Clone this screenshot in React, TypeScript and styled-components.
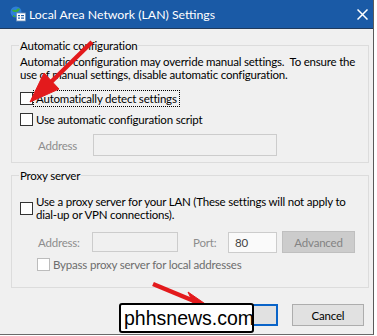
import styled, { createGlobalStyle } from 'styled-components';

const GlobalStyle = createGlobalStyle`
  html, body {
    margin: 0;
    padding: 0;
    background: #ffffff;
  }
  body {
    font-family: Lato, 'Noto Sans', sans-serif;
    font-size: 11.5px;
    letter-spacing: -0.2px;
    line-height: 15px;
    color: #000;
  }
`;

const Window = styled.div`
  position: relative;
  width: 373px;
  height: 334px;
  background: #f0f0f0;
  border-right: 1px solid #5a5a5a;
  border-bottom: 1px solid #6a6a6a;
  overflow: hidden;
  white-space: nowrap;
`;

const TitleBar = styled.div`
  display: flex;
  align-items: center;
  height: 29px;
  width: 377px;
  padding-left: 10px;
  box-sizing: border-box;
  background: #1a5aa6;
  border-bottom: 1px solid #203a5c;
  color: #fff;
`;

const Title = styled.span`
  flex: 1;
  margin-left: 3px;
  font-size: 12.3px;
  letter-spacing: 0;
`;

const CloseBtn = styled.span`
  display: flex;
  width: 20px;
`;

const Body = styled.div`
  padding: 9px 4px 0 11px;
`;

const Group = styled.fieldset<{ gap?: number }>`
  margin: ${p => p.gap ?? 0}px 0 0 0;
  padding: 1px 8px 6px 8px;
  border: 1px solid #dcdcdc;
  min-width: 0;
`;

const Legend = styled.legend`
  padding: 0 1px;
  line-height: 15px;
  margin-left: -1px;
`;

const Desc = styled.div`
  line-height: 13px;
  padding-top: 1px;
`;

const CheckRow = styled.label<{ top: number; disabled?: boolean }>`
  display: flex;
  align-items: center;
  margin-top: ${p => p.top}px;
  min-height: 16px;
  color: ${p => (p.disabled ? '#6d6d6d' : '#000')};
`;

const Box = styled.span<{ disabled?: boolean }>`
  flex: none;
  width: 11px;
  height: 11px;
  background: #fff;
  border: 1px solid ${p => (p.disabled ? '#bcbcbc' : '#333')};
`;

const CheckText = styled.span<{ focused?: boolean }>`
  margin-left: 2px;
  padding: 0 1px;
  line-height: 13px;
  outline: ${p => (p.focused ? '1px dotted #000' : 'none')};
  outline-offset: 1px;
`;

const FieldRow = styled.div<{ top: number }>`
  display: flex;
  align-items: center;
  margin-top: ${p => p.top}px;
  padding-left: 18px;
`;

const Label = styled.span<{ width: number }>`
  width: ${p => p.width}px;
  color: #8d8d8d;
  flex: none;
`;

const Input = styled.div<{ width: number; height: number; white?: boolean }>`
  box-sizing: border-box;
  width: ${p => p.width}px;
  height: ${p => p.height}px;
  border: 1px solid #cccccc;
  background: ${p => (p.white ? '#fafafa' : '#f0f0f0')};
  padding: 2px 0 0 6px;
  color: #444;
  flex: none;
`;

const Button = styled.div<{ width: number; primary?: boolean; disabled?: boolean }>`
  box-sizing: border-box;
  display: flex;
  align-items: center;
  justify-content: center;
  width: ${p => p.width}px;
  height: 22px;
  flex: none;
  background: ${p => (p.disabled ? '#cccccc' : '#e1e1e1')};
  border: ${p => (p.primary ? '2px solid #0a64c8' : `1px solid ${p.disabled ? '#bfbfbf' : '#adadad'}`)};
  color: ${p => (p.disabled ? '#838383' : '#000')};
`;

const Buttons = styled.div`
  display: flex;
  justify-content: flex-end;
  gap: 14px;
  margin-top: 16px;
  padding-right: 5px;
`;

const Overlay = styled.svg`
  position: absolute;
  left: 0;
  top: 0;
  pointer-events: none;
`;

const Watermark = styled.div`
  position: absolute;
  left: 119px;
  top: 303px;
  width: 135px;
  height: 30px;
  box-sizing: border-box;
  border: 2px solid #000;
  border-radius: 3px;
  background: #fff;
  font-family: 'Liberation Sans', Arial, sans-serif;
  font-size: 19.5px;
  letter-spacing: 0;
  line-height: 27px;
  padding-left: 3px;
  color: #000;
`;

const AppIcon = () => (
  <svg width="16" height="16" viewBox="0 0 16 16">
    <circle cx="6" cy="6" r="5.5" fill="#2d7fd8" />
    <path d="M2 4c2-1 3 1 4 0s2-2 4-1c-1 2-2 3-4 3S3 6 2 4z" fill="#3cae3c" />
    <path d="M3 9c1 0 2 1 3 2H3z" fill="#3cae3c" />
    <rect x="6.5" y="7" width="9" height="8" fill="#fff" stroke="#6b8fb8" strokeWidth="0.8" />
    <rect x="8" y="9" width="2" height="1.2" fill="#1d5fa8" />
    <rect x="11" y="9" width="3" height="1.2" fill="#1d5fa8" />
    <rect x="8" y="11.5" width="2" height="1.2" fill="#1d5fa8" />
    <rect x="11" y="11.5" width="3" height="1.2" fill="#1d5fa8" />
  </svg>
);

const CloseIcon = () => (
  <svg width="11" height="11" viewBox="0 0 11 11">
    <path d="M0.5 0.5l10 10M10.5 0.5l-10 10" stroke="#fff" strokeWidth="1.5" />
  </svg>
);

export default function App() {
  return (
    <>
      <GlobalStyle />
      <Window>
        <TitleBar>
          <AppIcon />
          <Title>Local Area Network (LAN) Settings</Title>
          <CloseBtn>
            <CloseIcon />
          </CloseBtn>
        </TitleBar>
        <Body>
          <Group gap={0}>
            <Legend>Automatic configuration</Legend>
            <Desc>
              Automatic configuration may override manual settings.&nbsp; To ensure the
              <br />
              use of manual settings, disable automatic configuration.
            </Desc>
            <CheckRow top={9}>
              <Box />
              <CheckText focused>Automatically detect settings</CheckText>
            </CheckRow>
            <CheckRow top={5}>
              <Box />
              <CheckText>Use automatic configuration script</CheckText>
            </CheckRow>
            <FieldRow top={7}>
              <Label width={55}>Address</Label>
              <Input width={184} height={22} />
            </FieldRow>
          </Group>
          <Group gap={5}>
            <Legend>Proxy server</Legend>
            <CheckRow top={11}>
              <Box />
              <CheckText>
                Use a proxy server for your LAN (These settings will not apply to
                <br />
                dial-up or VPN connections).
              </CheckText>
            </CheckRow>
            <FieldRow top={10}>
              <Label width={54}>Address:</Label>
              <Input width={86} height={20} />
              <Label width={35} style={{ marginLeft: 15 }}>
                Port:
              </Label>
              <Input width={49} height={21} white>
                80
              </Input>
              <Button width={73} disabled style={{ marginLeft: 5 }}>
                Advanced
              </Button>
            </FieldRow>
            <CheckRow top={3} disabled style={{ paddingLeft: 17, paddingBottom: 9 }}>
              <Box disabled />
              <CheckText>Bypass proxy server for local addresses</CheckText>
            </CheckRow>
          </Group>
          <Buttons>
            <Button width={75} primary>
              OK
            </Button>
            <Button width={72}>Cancel</Button>
          </Buttons>
        </Body>
        <Overlay width="377" height="336" viewBox="0 0 377 336">
          <g fill="#e31a1c" stroke="#e31a1c">
            <line x1="92" y1="42" x2="48" y2="85" strokeWidth="4.5" />
            <polygon points="30,102 59,89 44,73" strokeWidth="1" />
            <line x1="153" y1="284" x2="194" y2="301" strokeWidth="4.5" />
            <polygon points="214,310 188,292 196,309" strokeWidth="1" />
          </g>
        </Overlay>
        <Watermark>phhsnews.com</Watermark>
      </Window>
    </>
  );
}
